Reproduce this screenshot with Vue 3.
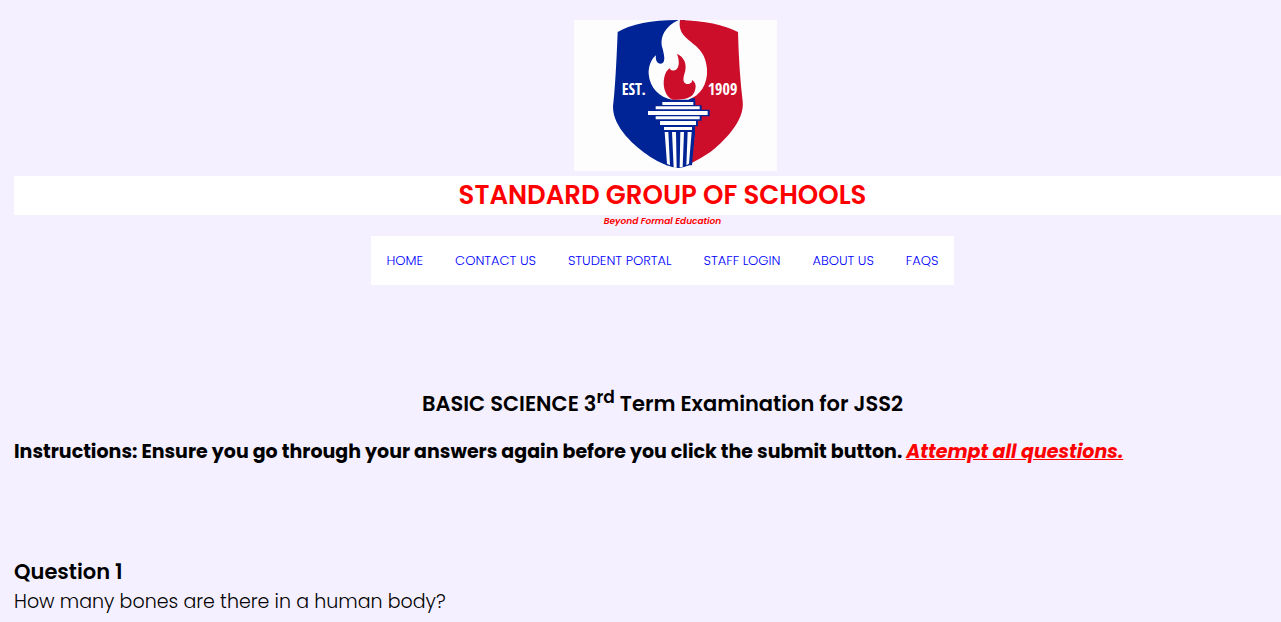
<script setup>
const links = ['HOME', 'CONTACT US', 'STUDENT PORTAL', 'STAFF LOGIN', 'ABOUT US', 'FAQS']
</script>

<template>
  <div class="page">
    <header class="header">
      <svg class="logo" viewBox="12 15 609 453" role="img" aria-label="School crest, established 1909">
        <rect x="12" y="15" width="609" height="453" fill="#fdfdfd" />
        <path fill="#002395" d="M143 51Q205 15 322 15H345V240H376V350L365 446Q340 459 324 459Q285 454 240 425C195 395 128 338 129 274Q137 205 143 51Z" />
        <path fill="#cd0e2b" d="M330 15Q440 18 504 51Q507 170 518 258C526 320 455 385 420 412Q392 431 365 444L375 350V250H300V150Z" />
        <path fill="#fdfdfd" d="M326 15C285 33 267 69 278 101C282 120 287 137 277 145C264 150 255 137 258 121C244 132 235 153 236 177C239 219 269 247 306 254H355C390 242 414 209 411 162C407 103 370 91 346 66C330 49 327 35 330 15Z" />
        <path fill="#cd0e2b" d="M321 116C342 126 350 146 346 166C342 182 338 193 342 201C347 210 358 208 363 203C367 200 367 198 365 195C375 199 379 210 376 222C373 237 365 244 355 248Q340 254 307 254C292 246 281 228 281 203C282 181 289 165 300 160C301 166 306 168 314 166C326 162 331 143 321 116Z" />
        <path fill="#002395" d="M271 256H376V271H395V284H419V304H395V317H384V334H371V350H375L366 451H288L279 350V334H264V317H252V303H230V285H252V271H271Z" />
        <g fill="#fdfdfd">
          <path d="M277 261H370V270H277ZM257 274H389V283H257ZM234 288H413V300H234ZM257 304H389V313H257ZM270 318H378V330H270ZM282 336H366V345H282Z" />
          <path d="M284 351H295L300 451L291 446ZM306 351H318L320 458H311ZM331 351H342L338 457H329ZM353 351H365L357 446L349 451Z" />
        </g>
        <g class="crest-text" fill="#fff">
          <text x="155" y="239">EST.</text>
          <text x="413" y="239">1909</text>
        </g>
      </svg>
      <h1 class="name">STANDARD GROUP OF SCHOOLS</h1>
      <p class="motto">Beyond Formal Education</p>
      <nav class="nav">
        <a v-for="link in links" :key="link" href="#">{{ link }}</a>
      </nav>
    </header>
    <main>
      <h2 class="exam">BASIC SCIENCE 3<sup>rd</sup> Term Examination for JSS2</h2>
      <p class="instructions">
        Instructions: Ensure you go through your answers again before you click the submit button.
        <em>Attempt all questions.</em>
      </p>
      <section class="question">
        <h3>Question 1</h3>
        <p>How many bones are there in a human body?</p>
      </section>
    </main>
  </div>
</template>

<style>
body {
  background: #f4f0ff;
}
</style>

<style scoped>
.page {
  padding: 20px 0 0 14px;
  font-family: Poppins, Inter, "Open Sans", sans-serif;
  color: #000;
}
h1, h2, h3, p {
  margin: 0;
}
.header {
  display: flex;
  flex-direction: column;
  align-items: center;
}
.logo {
  width: 203px;
  height: 151px;
  margin-left: 56px;
}
.crest-text {
  font: 600 48px "Open Sans Condensed", "DejaVu Sans Condensed", sans-serif;
}
.name {
  align-self: stretch;
  margin-top: 5px;
  padding-left: 30px;
  background: #fff;
  color: #f00;
  font-size: 26px;
  font-weight: 600;
  line-height: 39px;
  text-align: center;
}
.motto {
  padding-left: 30px;
  color: #f00;
  font-size: 9px;
  font-style: italic;
  font-weight: 600;
  line-height: 13px;
}
.nav {
  display: flex;
  gap: 32px;
  margin: 8px 0 0 30px;
  padding: 0 16px;
  background: #fff;
}
.nav a {
  color: #00f;
  font-size: 13px;
  font-weight: 300;
  line-height: 49px;
  text-decoration: none;
  white-space: nowrap;
}
.exam {
  margin-top: 104px;
  padding-left: 30px;
  font-size: 21px;
  font-weight: 600;
  line-height: 30px;
  text-align: center;
}
.exam sup {
  font-size: 17px;
  line-height: 0;
}
.instructions {
  margin-top: 18px;
  font-size: 19px;
  font-weight: 700;
  line-height: 30px;
}
.instructions em {
  color: #f00;
  text-decoration: underline;
}
.question {
  margin-top: 90px;
}
.question h3 {
  font-size: 21px;
  font-weight: 600;
  line-height: 30px;
}
.question p {
  font-size: 19px;
  font-weight: 300;
  line-height: 30px;
}
</style>
